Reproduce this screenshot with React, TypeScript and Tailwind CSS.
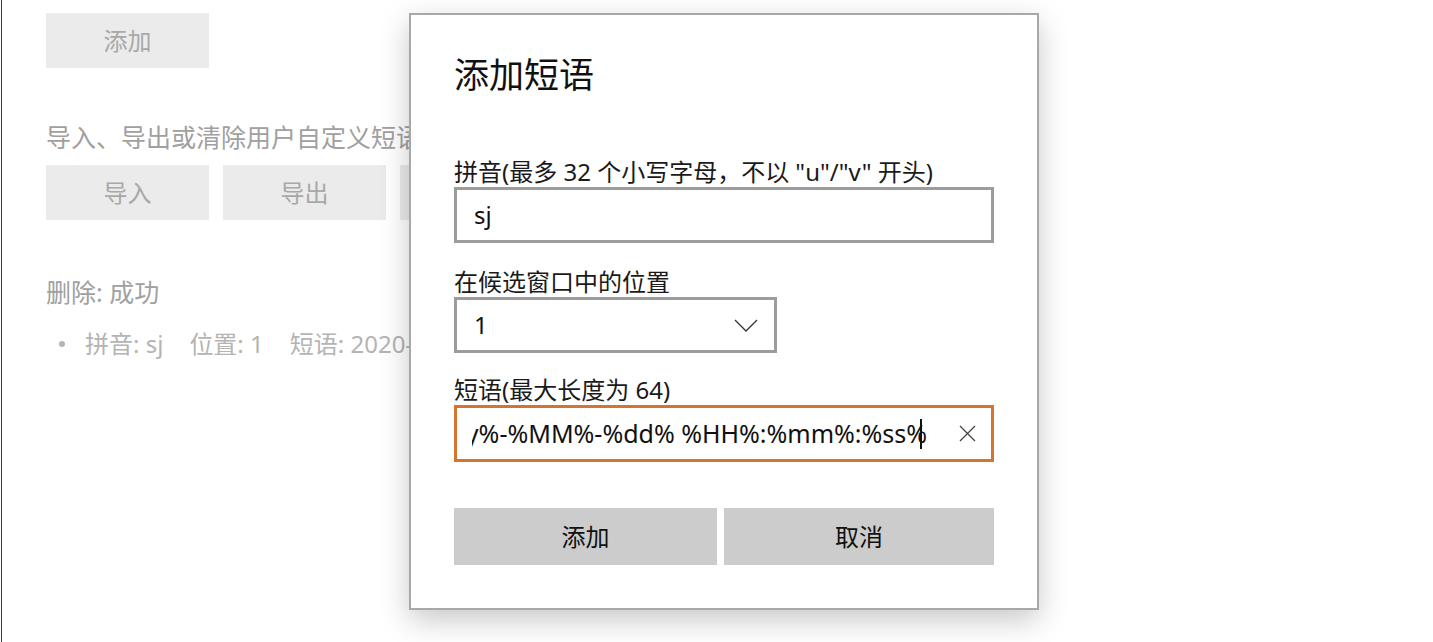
const font = {
  fontFamily: '"Noto Sans", "Noto Sans CJK SC", sans-serif',
};

const BgButton = ({ label }: { label: string }) => (
  <div className="w-[163px] h-[55px] flex justify-center items-center bg-[#ebebeb] text-[#a8a8a8] text-[24px] shrink-0">
    {label}
  </div>
);

const App = () => {
  return (
    <div
      className="relative w-[1433px] h-[642px] bg-white overflow-hidden"
      style={font}
    >
      <div className="h-full ml-px border-l border-[#3a3a3a] pl-[44px] pt-[13px]">
        <BgButton label="添加" />

        <p className="mt-[54px] text-[25px] leading-[30px] text-[#a0a0a0] whitespace-nowrap">
          导入、导出或清除用户自定义短语
        </p>
        <div className="flex gap-[14px] mt-[13px]">
          <BgButton label="导入" />
          <BgButton label="导出" />
          <BgButton label="清除" />
        </div>

        <p className="mt-[57px] text-[25px] leading-[30px] text-[#a0a0a0]">
          删除: 成功
        </p>
        <div className="flex items-center mt-[22px] text-[24px] leading-[30px] text-[#b4b4b4] whitespace-nowrap">
          <span className="w-[6px] h-[6px] rounded-full bg-[#b4b4b4] ml-[13px] mr-[20px]" />
          <span>拼音: sj</span>
          <span className="ml-[26px]">位置: 1</span>
          <span className="ml-[26px]">短语: 2020-01-01 12:00:00</span>
        </div>
      </div>

      {/* dialog */}
      <div className="absolute left-[409px] top-[13px] w-[630px] h-[597px] bg-white border-2 border-[#a8a8a8] shadow-[0_10px_28px_rgba(0,0,0,0.22)] px-[43px] pt-[38px]">
        <h2 className="text-[35px] leading-[44px] text-[#111]">添加短语</h2>

        <p className="mt-[60px] text-[24px] leading-[30px] text-[#1a1a1a] whitespace-nowrap">
          拼音(最多 32 个小写字母，不以 "u"/"v" 开头)
        </p>
        <div className="h-[56px] border-[3px] border-[#9c9c9c] flex items-center pl-[17px] text-[24px] text-[#111]">
          sj
        </div>

        <p className="mt-[24px] text-[24px] leading-[30px] text-[#1a1a1a]">
          在候选窗口中的位置
        </p>
        <div className="w-[323px] h-[56px] border-[3px] border-[#9c9c9c] flex items-center justify-between pl-[17px] pr-[16px] text-[24px] text-[#111]">
          <span>1</span>
          <svg width="24" height="13" viewBox="0 0 24 13" fill="none">
            <path d="M1 1 L12 12 L23 1" stroke="#333" strokeWidth="1.3" />
          </svg>
        </div>

        <p className="mt-[21px] text-[24px] leading-[31px] text-[#1a1a1a]">
          短语(最大长度为 64)
        </p>
        <div className="h-[57px] border-[3px] border-[#d4742f] flex items-center pl-[15px] pr-[15px] text-[25px] text-[#111]">
          <div className="flex-1 overflow-hidden flex justify-end whitespace-nowrap">
            <span>%yyyy%-%MM%-%dd% %HH%:%mm%:%ss%</span>
            <span className="w-[2px] h-[30px] bg-[#111] -ml-[7px] self-center shrink-0" />
            <span className="w-[7px] shrink-0" />
          </div>
          <svg className="ml-[30px] shrink-0" width="17" height="17" viewBox="0 0 17 17">
            <path d="M1 1 L16 16 M16 1 L1 16" stroke="#444" strokeWidth="1.3" />
          </svg>
        </div>

        <div className="flex gap-[7px] mt-[46px]">
          <button className="w-[263px] h-[57px] bg-[#cccccc] text-[24px] text-[#111]">
            添加
          </button>
          <button className="flex-1 h-[57px] bg-[#cccccc] text-[24px] text-[#111]">
            取消
          </button>
        </div>
      </div>
    </div>
  );
};

export default App;
